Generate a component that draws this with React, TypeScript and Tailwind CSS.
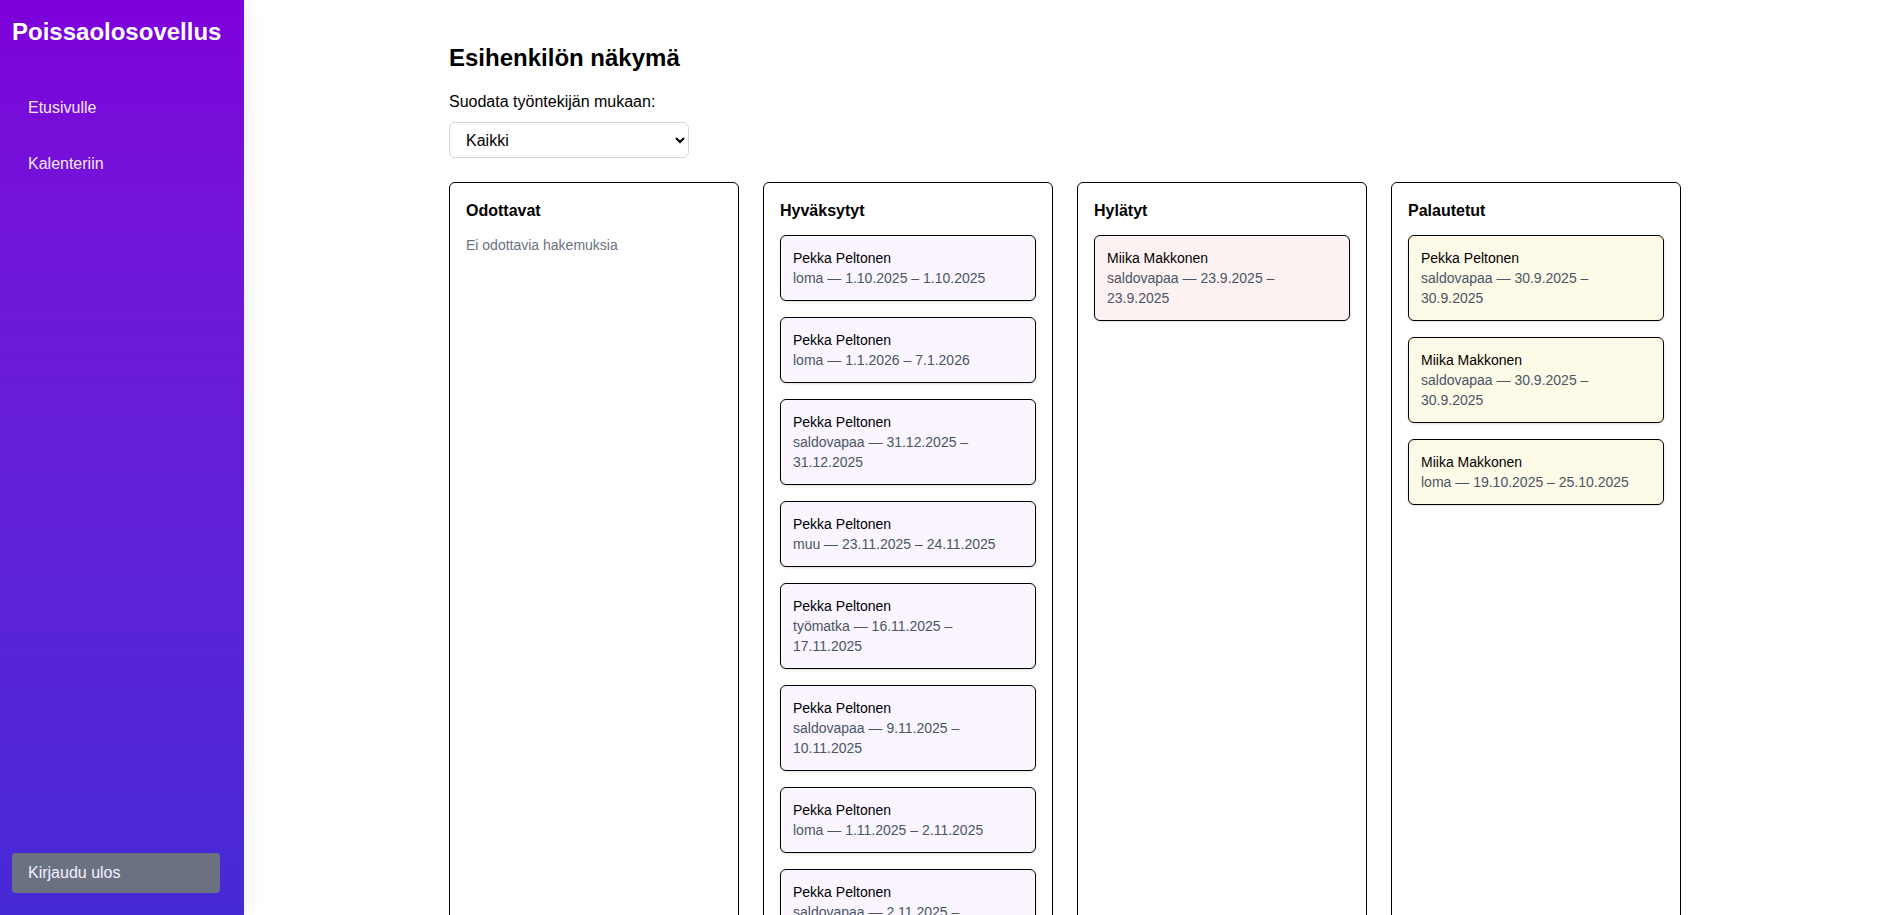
import { useState } from "react";

type Hakemus = {
  nimi: string;
  tyyppi: string;
  alku: string;
  loppu: string;
};

const hyvaksytyt: Hakemus[] = [
  { nimi: "Pekka Peltonen", tyyppi: "loma", alku: "1.10.2025", loppu: "1.10.2025" },
  { nimi: "Pekka Peltonen", tyyppi: "loma", alku: "1.1.2026", loppu: "7.1.2026" },
  { nimi: "Pekka Peltonen", tyyppi: "saldovapaa", alku: "31.12.2025", loppu: "31.12.2025" },
  { nimi: "Pekka Peltonen", tyyppi: "muu", alku: "23.11.2025", loppu: "24.11.2025" },
  { nimi: "Pekka Peltonen", tyyppi: "työmatka", alku: "16.11.2025", loppu: "17.11.2025" },
  { nimi: "Pekka Peltonen", tyyppi: "saldovapaa", alku: "9.11.2025", loppu: "10.11.2025" },
  { nimi: "Pekka Peltonen", tyyppi: "loma", alku: "1.11.2025", loppu: "2.11.2025" },
  { nimi: "Pekka Peltonen", tyyppi: "saldovapaa", alku: "2.11.2025", loppu: "2.11.2025" },
  { nimi: "Miika Makkonen", tyyppi: "loma", alku: "6.10.2025", loppu: "10.10.2025" },
];

const hylatyt: Hakemus[] = [
  { nimi: "Miika Makkonen", tyyppi: "saldovapaa", alku: "23.9.2025", loppu: "23.9.2025" },
];

const palautetut: Hakemus[] = [
  { nimi: "Pekka Peltonen", tyyppi: "saldovapaa", alku: "30.9.2025", loppu: "30.9.2025" },
  { nimi: "Miika Makkonen", tyyppi: "saldovapaa", alku: "30.9.2025", loppu: "30.9.2025" },
  { nimi: "Miika Makkonen", tyyppi: "loma", alku: "19.10.2025", loppu: "25.10.2025" },
];

const HakemusKortti = ({ h, bg }: { h: Hakemus; bg: string }) => (
  <div className={`${bg} border border-black rounded-md p-3 mb-4 shadow-sm text-sm leading-5`}>
    <div className="text-black">{h.nimi}</div>
    <div className="text-gray-600">
      {h.tyyppi} — {h.alku} – {h.loppu}
    </div>
  </div>
);

const Sarake = ({
  otsikko,
  children,
}: {
  otsikko: string;
  children: React.ReactNode;
}) => (
  <div className="border border-black rounded-md bg-white p-4">
    <h3 className="font-bold text-base leading-6 mb-3 text-black">{otsikko}</h3>
    {children}
  </div>
);

const App = () => {
  const [valinta, setValinta] = useState("kaikki");

  return (
    <div className="flex min-h-screen bg-white font-['Liberation_Sans',Arial,sans-serif]">
      {/* sivupalkki */}
      <aside className="w-[244px] shrink-0 h-screen sticky top-0 z-10 flex flex-col px-3 pt-4 pb-[22px] bg-gradient-to-b from-[#7e00da] to-[#4629d4] shadow-[4px_0_14px_rgba(0,0,0,0.07)]">
        <h1 className="text-2xl leading-8 font-bold text-white">Poissaolosovellus</h1>
        <nav className="mt-8 flex flex-col">
          <a className="px-4 py-4 text-base leading-6 text-[#f3e8ff]" href="#">
            Etusivulle
          </a>
          <a className="px-4 py-4 text-base leading-6 text-[#f3e8ff]" href="#">
            Kalenteriin
          </a>
        </nav>
        <button className="mt-auto w-[208px] h-10 rounded bg-gray-500 px-4 text-left text-base text-[#f5f0ff]">
          Kirjaudu ulos
        </button>
      </aside>

      <main className="flex-1 min-w-0 pr-[3px]">
        <div className="max-w-[1280px] mx-auto px-6 pt-[42px] pb-10">
          <h2 className="text-2xl leading-8 font-bold text-black mb-4">Esihenkilön näkymä</h2>
          <label className="block text-base leading-6 text-black mb-2">
            Suodata työntekijän mukaan:
          </label>
          <select
            value={valinta}
            onChange={(e) => setValinta(e.target.value)}
            className="w-[240px] h-[36px] border border-gray-300 rounded-md px-3 bg-white text-base text-black"
          >
            <option value="kaikki">Kaikki</option>
            <option value="pekka">Pekka Peltonen</option>
            <option value="miika">Miika Makkonen</option>
          </select>

          <div className="grid grid-cols-4 gap-6 mt-6">
            <Sarake otsikko="Odottavat">
              <p className="text-sm leading-5 text-gray-500">Ei odottavia hakemuksia</p>
            </Sarake>
            <Sarake otsikko="Hyväksytyt">
              {hyvaksytyt.map((h, i) => (
                <HakemusKortti key={i} h={h} bg="bg-[#faf5ff]" />
              ))}
            </Sarake>
            <Sarake otsikko="Hylätyt">
              {hylatyt.map((h, i) => (
                <HakemusKortti key={i} h={h} bg="bg-[#fdf2f2]" />
              ))}
            </Sarake>
            <Sarake otsikko="Palautetut">
              {palautetut.map((h, i) => (
                <HakemusKortti key={i} h={h} bg="bg-[#fefae8]" />
              ))}
            </Sarake>
          </div>
        </div>
      </main>
    </div>
  );
};

export default App;
